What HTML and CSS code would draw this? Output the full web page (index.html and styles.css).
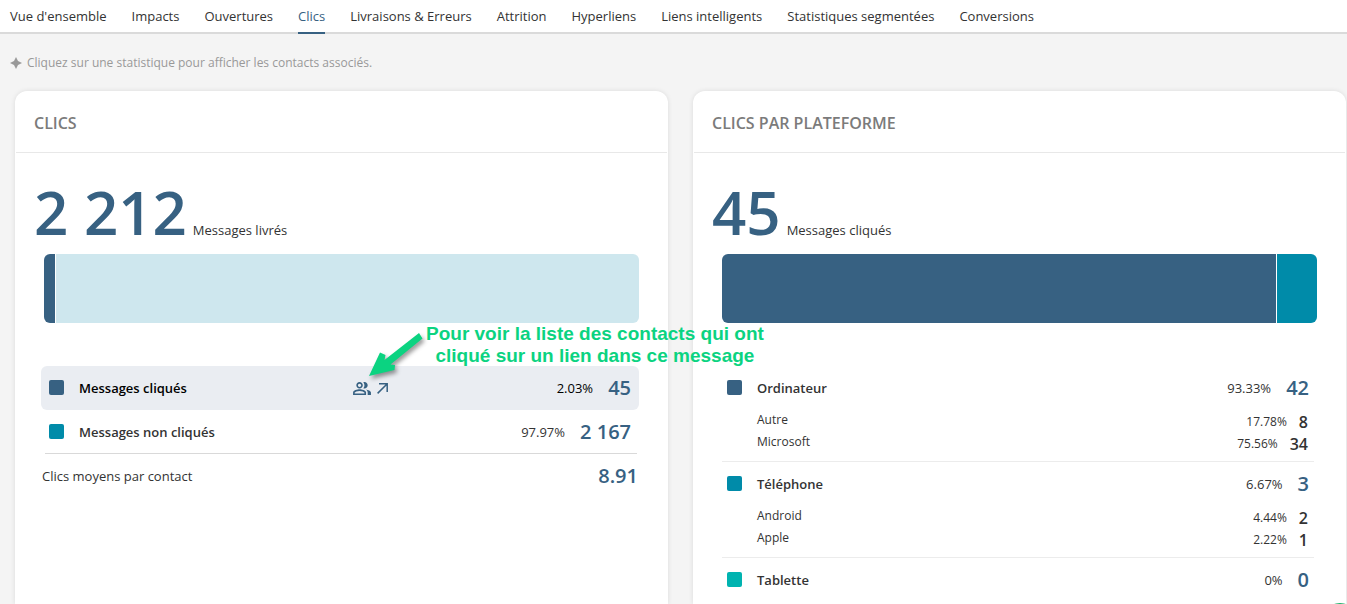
FILE: index.html
```html
<!DOCTYPE html>
<html lang="fr">
<head>
<meta charset="utf-8">
<meta name="viewport" content="width=device-width, initial-scale=1">
<title>Clics</title>
<link rel="stylesheet" href="styles.css">
</head>
<body>
<nav class="tabs">
  <a href="#">Vue d'ensemble</a>
  <a href="#">Impacts</a>
  <a href="#">Ouvertures</a>
  <a href="#" class="active" aria-current="page">Clics</a>
  <a href="#">Livraisons &amp; Erreurs</a>
  <a href="#">Attrition</a>
  <a href="#">Hyperliens</a>
  <a href="#">Liens intelligents</a>
  <a href="#">Statistiques segmentées</a>
  <a href="#">Conversions</a>
</nav>
<p class="hint">
  <svg width="12" height="12" viewBox="0 0 12 12" aria-hidden="true"><path d="M6 0L8 4L12 6L8 8L6 12L4 8L0 6L4 4Z" fill="#999"/></svg>
  Cliquez sur une statistique pour afficher les contacts associés.
</p>
<main class="cards">
  <section class="card">
    <h2>CLICS</h2>
    <div class="content">
      <div class="total"><strong>2 212</strong><span>Messages livrés</span></div>
      <div class="bar"><i class="navy" style="width:2.03%"></i><i class="pale"></i></div>
      <div class="rows">
        <div class="row hovered">
          <i class="swatch navy"></i><span class="name">Messages cliqués</span>
          <span class="actions">
            <button type="button" aria-label="Contacts"><svg width="18" height="13" viewBox="1 4 22 16" fill="#376182"><path d="M16.67 13.13C18.04 14.06 19 15.32 19 17v3h4v-3c0-2.18-3.57-3.47-6.33-3.87zM15 12c2.21 0 4-1.79 4-4s-1.79-4-4-4c-.47 0-.91.1-1.33.24C14.5 5.27 15 6.58 15 8s-.5 2.73-1.33 3.76c.42.14.86.24 1.33.24zM9 12c2.21 0 4-1.79 4-4s-1.79-4-4-4-4 1.79-4 4 1.79 4 4 4zm0-6c1.1 0 2 .9 2 2s-.9 2-2 2-2-.9-2-2 .9-2 2-2zM9 13c-2.67 0-8 1.34-8 4v3h16v-3c0-2.66-5.33-4-8-4zm6 5H3v-.99C3.2 16.29 6.3 15 9 15s5.8 1.29 6 2v1z"/></svg></button>
            <button type="button" aria-label="Ouvrir"><svg width="11" height="11" viewBox="0 0 11 11" fill="none" stroke="#376182" stroke-width="1.5"><path d="M.6 10.4L10 1M2 .8H10.2V9"/></svg></button>
          </span>
          <span class="pct">2.03%</span><a href="#" class="count">45</a>
        </div>
        <div class="row last">
          <i class="swatch teal"></i><span class="name">Messages non cliqués</span>
          <span class="pct">97.97%</span><a href="#" class="count">2 167</a>
        </div>
        <div class="row average"><span>Clics moyens par contact</span><a href="#" class="count">8.91</a></div>
      </div>
    </div>
    <div class="callout">
      <svg width="66" height="62" viewBox="0 0 66 62" aria-hidden="true"><path d="M59 10L62.500 15.500L30.500 41.500L35 42L34.500 47L9 53L20 29.500L25.500 32L24.500 37Z" fill="#0bd381"/></svg>
      <p>Pour voir la liste des contacts qui ont<br>cliqué sur un lien dans ce message</p>
    </div>
  </section>
  <section class="card">
    <h2>CLICS PAR PLATEFORME</h2>
    <div class="content">
      <div class="total"><strong>45</strong><span>Messages cliqués</span></div>
      <div class="bar"><i class="navy" style="width:93.33%"></i><i class="teal"></i></div>
      <div class="rows platforms">
        <div class="group">
          <div class="row"><i class="swatch navy"></i><span class="name">Ordinateur</span><span class="pct">93.33%</span><a href="#" class="count">42</a></div>
          <div class="subs">
            <div class="sub"><span>Autre</span><span class="pct">17.78%</span><a href="#">8</a></div>
            <div class="sub"><span>Microsoft</span><span class="pct">75.56%</span><a href="#">34</a></div>
          </div>
        </div>
        <div class="group">
          <div class="row"><i class="swatch teal"></i><span class="name">Téléphone</span><span class="pct">6.67%</span><a href="#" class="count">3</a></div>
          <div class="subs">
            <div class="sub"><span>Android</span><span class="pct">4.44%</span><a href="#">2</a></div>
            <div class="sub"><span>Apple</span><span class="pct">2.22%</span><a href="#">1</a></div>
          </div>
        </div>
        <div class="group">
          <div class="row"><i class="swatch aqua"></i><span class="name">Tablette</span><span class="pct">0%</span><a href="#" class="count">0</a></div>
        </div>
      </div>
    </div>
  </section>
</main>
<button type="button" class="bubble" aria-label="Aide"></button>
</body>
</html>
```

FILE: styles.css
```css
* { box-sizing: border-box; }
html { height: 100%; }
body {
  margin: 0;
  min-height: 100%;
  display: flex;
  flex-direction: column;
  overflow: hidden;
  background: #f4f4f4;
  color: #333;
  font: 13px/20px "Open Sans", sans-serif;
}
a { color: inherit; text-decoration: none; }
button { border: 0; padding: 0; background: none; cursor: pointer; }
.tabs {
  display: flex;
  gap: 25px;
  height: 34px;
  padding-left: 10px;
  background: #fff;
  border-bottom: 2px solid #dadada;
  white-space: nowrap;
}
.tabs a { height: 34px; padding-top: 6px; }
.tabs .active { color: #376182; border-bottom: 2px solid #376182; }
.hint {
  display: flex;
  align-items: center;
  gap: 5px;
  margin: 19px 0 18px 10px;
  color: #999;
  font-size: 12px;
}
.cards {
  flex: 1;
  display: grid;
  grid-template-columns: 1fr 1fr;
  gap: 25px;
  padding: 0 1px 0 15px;
}
.card {
  position: relative;
  background: #fff;
  border-radius: 12px 12px 0 0;
  box-shadow: 0 0 5px #0000001a;
}
.card h2 {
  margin: 0 1px;
  padding: 20px 18px 17px;
  border-bottom: 1px solid #e8e8e8;
  color: #7b7b7b;
  font-size: 16px;
  line-height: 24px;
  font-weight: 600;
}
.content { padding: 23px 29px 0 19px; }
.total { display: flex; align-items: baseline; gap: 6px; height: 78px; }
.total strong { color: #376182; font-size: 60px; line-height: 72px; font-weight: 600; }
.bar {
  display: flex;
  height: 69px;
  margin-left: 10px;
  border-radius: 6px;
  overflow: hidden;
}
.bar i:first-child { border-right: 1px solid #fff; }
.bar i:last-child { flex: 1; }
.navy { background: #376182; }
.teal { background: #008ba9; }
.aqua { background: #00b3b0; }
.pale { background: #cee7ee; }
.rows { margin: 43px 0 0 7px; }
.row { display: flex; align-items: center; height: 44px; padding: 0 8px; }
.row.hovered { background: #eaedf2; border-radius: 6px; color: #000; }
.swatch { width: 15px; height: 15px; margin-bottom: 1px; border-radius: 2px; }
.name { margin-left: 15px; flex: 1; font-weight: 600; }
.hovered .name { flex: 0 0 47%; }
.actions { display: flex; align-items: center; gap: 6px; flex: 1; }
.actions button { display: flex; }
.count {
  margin-left: 15px;
  color: #376182;
  font-size: 20px;
  font-weight: 600;
}
.average { justify-content: space-between; padding: 0 1px; }
.row.last { background: linear-gradient(#d9d9d9, #d9d9d9) 4px 100% / calc(100% - 6px) 1px no-repeat; }
.group:not(:last-child) { background: linear-gradient(#ececec, #ececec) 3px 100% / calc(100% - 6px) 1px no-repeat; }
.subs { padding: 0 9px 8px 38px; }
.sub { display: grid; grid-template-columns: 1fr auto auto; gap: 12px; height: 22px; font-size: 12px; }
.sub .pct { padding-top: 2px; }
.sub a { padding-top: 2px; font-size: 16px; font-weight: 600; }
.callout {
  position: absolute;
  z-index: 1;
  left: 345px;
  top: 232px;
  display: flex;
  color: #0bd381;
  font: bold 19px/22px "Liberation Sans", Arial, sans-serif;
  text-align: center;
  white-space: nowrap;
}
.callout svg { filter: drop-shadow(2px 3px 2px #0006); }
.callout p { margin: 0; }
.bubble {
  position: fixed;
  right: -13px;
  bottom: -39px;
  width: 40px;
  height: 40px;
  border-radius: 50%;
  background: #1fb26b;
}
```
